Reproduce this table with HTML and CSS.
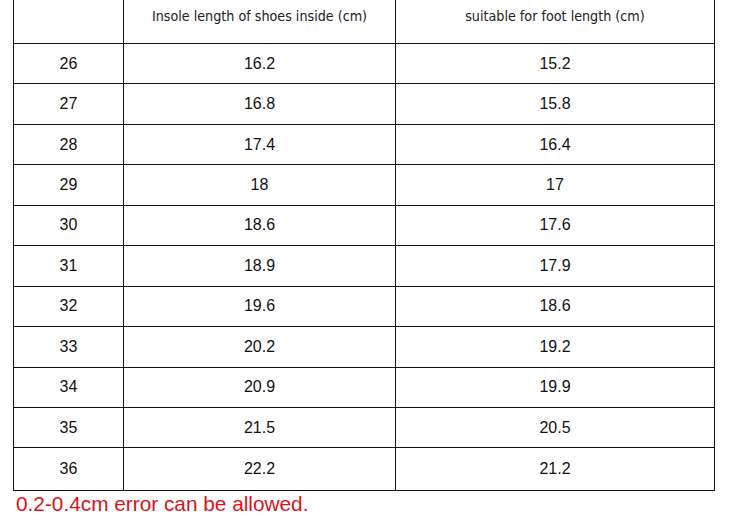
FILE: index.html
```html
<!DOCTYPE html>
<html>
<head>
<meta charset="utf-8">
<link rel="stylesheet" href="styles.css">
</head>
<body>
<table class="size-table">
  <colgroup>
    <col class="c1"><col class="c2"><col class="c3">
  </colgroup>
  <thead>
    <tr class="head-row"><th></th><th>Insole length of shoes inside (cm)</th><th>suitable for foot length (cm)</th></tr>
  </thead>
  <tbody>
    <tr><td>26</td><td>16.2</td><td>15.2</td></tr>
    <tr><td>27</td><td>16.8</td><td>15.8</td></tr>
    <tr><td>28</td><td>17.4</td><td>16.4</td></tr>
    <tr><td>29</td><td>18</td><td>17</td></tr>
    <tr><td>30</td><td>18.6</td><td>17.6</td></tr>
    <tr><td>31</td><td>18.9</td><td>17.9</td></tr>
    <tr><td>32</td><td>19.6</td><td>18.6</td></tr>
    <tr><td>33</td><td>20.2</td><td>19.2</td></tr>
    <tr><td>34</td><td>20.9</td><td>19.9</td></tr>
    <tr><td>35</td><td>21.5</td><td>20.5</td></tr>
    <tr class="last-row"><td>36</td><td>22.2</td><td>21.2</td></tr>
  </tbody>
</table>
<p class="note">0.2-0.4cm error can be allowed.</p>
</body>
</html>
```
FILE: styles.css
```css
html, body {
  margin: 0;
  padding: 0;
  background: #ffffff;
}
body {
  font-family: "Liberation Sans", Arial, sans-serif;
  overflow: hidden;
}
.size-table {
  border-collapse: collapse;
  margin: -10px 0 0 13px;
  width: 701px;
  table-layout: fixed;
}
.c1 { width: 110px; }
.c2 { width: 272px; }
.c3 { width: 319px; }
.size-table th,
.size-table td {
  border: 1px solid #111;
  padding: 0;
  text-align: center;
  vertical-align: middle;
}
.size-table th {
  font-family: "DejaVu Sans Condensed", "DejaVu Sans", sans-serif;
  font-weight: normal;
  font-size: 14.2px;
  color: #222;
  height: 50px;
  padding-bottom: 2px;
}
.size-table td {
  font-size: 16px;
  color: #111;
  height: 39.45px;
}
.size-table .last-row td {
  height: 42px;
}
.note {
  margin: 1px 0 0 16px;
  font-size: 20.8px;
  line-height: 24px;
  color: #d8141c;
}
```
